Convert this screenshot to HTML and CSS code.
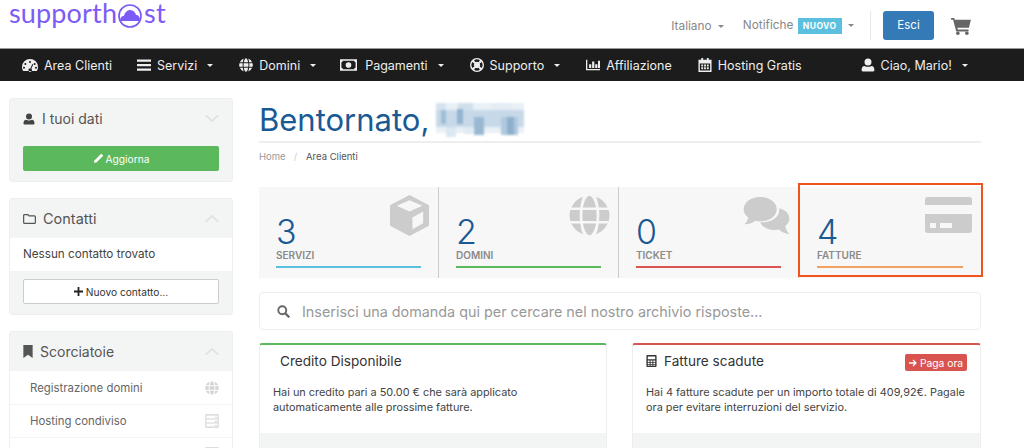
FILE: index.html
```html
<!DOCTYPE html>
<html lang="it">
<head>
<meta charset="utf-8">
<title>Area Clienti</title>
<link rel="stylesheet" href="styles.css">
</head>
<body>
<svg class="defs" width="0" height="0" aria-hidden="true">
  <symbol id="i-globe" viewBox="0 0 24 24"><path fill="currentColor" d="M8.200 7.300C8.900 3.300 10.500.4 12 .4s3.100 2.900 3.800 6.900ZM6.600 7.300H1.400A12 12 0 0 1 8.200 1C7.400 2.500 6.900 5 6.600 7.300ZM17.400 7.300h5.200A12 12 0 0 0 15.800 1c.8 1.500 1.300 4 1.600 6.300ZM.8 8.800h5.600c-.2 2.200-.2 4.200 0 6.400H.8a12 12 0 0 1 0-6.400ZM8 8.800h8c.2 2.200.2 4.200 0 6.400H8c-.2-2.200-.2-4.200 0-6.400ZM17.600 8.800h5.600a12 12 0 0 1 0 6.400h-5.600c.2-2.200.2-4.200 0-6.400ZM8.200 16.700h7.600c-.7 4-2.300 6.900-3.800 6.900s-3.100-2.900-3.800-6.900ZM1.400 16.700h5.200c.3 2.300.8 4.800 1.600 6.300a12 12 0 0 1-6.800-6.300ZM17.400 16.700h5.200a12 12 0 0 1-6.800 6.300c.8-1.500 1.300-4 1.600-6.300Z"/></symbol>
  <symbol id="i-user" viewBox="0 0 24 24"><path fill="currentColor" d="M12 1a6 6 0 1 1 0 12 6 6 0 0 1 0-12ZM3 23c-1 0-2-.8-2-2 0-4 1.500-7.500 5-7.500 1.500 1 3.500 1.700 6 1.700s4.500-.7 6-1.700c3.500 0 5 3.500 5 7.500 0 1.200-1 2-2 2Z"/></symbol>
  <symbol id="i-chev-down" viewBox="0 0 16 10"><path fill="none" stroke="currentColor" stroke-width="2" d="m1 1.500 7 6.500 7-6.500"/></symbol>
  <symbol id="i-chev-up" viewBox="0 0 16 10"><path fill="none" stroke="currentColor" stroke-width="2" d="m1 8.500 7-6.500 7 6.500"/></symbol>
  <symbol id="i-server" viewBox="0 0 16 16"><path fill="none" stroke="currentColor" stroke-width="1.200" d="M1 1h14v14H1zM1 5.700h14M1 10.300h14"/><path fill="currentColor" d="M11 8h3v1h-3zM11 12.500h3v1h-3zM11 3h3v1h-3z"/></symbol>
</svg>

<header class="topbar">
  <div class="logo">
    <span class="logo-text">supporth</span>
    <svg class="logo-mark" viewBox="0 0 24 24" aria-hidden="true"><circle cx="12" cy="12" r="11" fill="none" stroke="#7d5cf6" stroke-width="1.700"/><path fill="#7d5cf6" d="M2.300 17c-.4-2.600 1.200-5 3.700-5.200C6.800 8.500 9.200 6 12.200 6c3 0 5.200 2.200 5.800 5 2.700-.1 4.300 2.500 3.800 6Z"/></svg>
    <span class="logo-text">st</span>
  </div>
  <div class="top-right">
    <span class="top-link lang">Italiano <i class="caret"></i></span>
    <span class="top-link notif">Notifiche <b class="new">NUOVO</b> <i class="caret"></i></span>
    <span class="sep"></span>
    <span class="btn-esci">Esci</span>
    <svg class="cart" viewBox="0 0 22 20" aria-hidden="true"><path fill="#666" d="M0 1h3.500l.6 2H22l-2.200 9H7l.4 2h12v2H5.700L2.200 3H0Z"/><circle cx="7.500" cy="18" r="2" fill="#666"/><circle cx="17.500" cy="18" r="2" fill="#666"/></svg>
  </div>
</header>

<nav class="navbar">
  <a class="nav-item n-area"><svg class="ni" viewBox="0 0 24 20"><path fill="currentColor" fill-rule="evenodd" d="M12 1a12 12 0 0 0-12 12c0 2.500.7 4.500 2 6h20c1.300-1.500 2-3.500 2-6A12 12 0 0 0 12 1Zm0 3a1.500 1.500 0 1 1 0 3 1.500 1.500 0 0 1 0-3ZM5 7a1.500 1.500 0 1 1 0 3 1.500 1.500 0 0 1 0-3Zm14 0a1.500 1.500 0 1 1 0 3 1.500 1.500 0 0 1 0-3ZM3 12.500a1.500 1.500 0 1 1 0 3 1.500 1.500 0 0 1 0-3Zm18 0a1.500 1.500 0 1 1 0 3 1.500 1.500 0 0 1 0-3Zm-5.500-4 1.400.6-3 6.600a2.500 2.500 0 1 1-1.400-.6Z"/></svg>Area Clienti</a>
  <a class="nav-item n-serv"><svg class="ni" viewBox="0 0 14 14"><path fill="currentColor" d="M0 1.500h14v2.200H0zM0 6h14v2.200H0zM0 10.500h14v2.200H0z"/></svg>Servizi <i class="caret"></i></a>
  <a class="nav-item n-dom"><svg class="ni"><use href="#i-globe"/></svg>Domini <i class="caret"></i></a>
  <a class="nav-item n-pag"><svg class="ni wide" viewBox="0 0 18 12"><path fill="currentColor" fill-rule="evenodd" d="M0 0h18v12H0Zm3 1.500A1.500 1.500 0 0 1 1.500 3v6A1.500 1.500 0 0 1 3 10.500h12A1.500 1.500 0 0 1 16.500 9V3A1.500 1.500 0 0 1 15 1.500ZM9 3a3 3 0 1 1 0 6 3 3 0 0 1 0-6Z"/></svg>Pagamenti <i class="caret"></i></a>
  <a class="nav-item n-sup"><svg class="ni" viewBox="0 0 24 24"><path fill="currentColor" fill-rule="evenodd" d="M12 0a12 12 0 1 0 0 24 12 12 0 0 0 0-24Zm-5 3.800a9.500 9.500 0 0 1 10 0l-2.400 3.600a5 5 0 0 0-5.200 0ZM3.800 7l3.600 2.400a5 5 0 0 0 0 5.200L3.800 17a9.500 9.500 0 0 1 0-10Zm16.400 0a9.500 9.500 0 0 1 0 10l-3.600-2.400a5 5 0 0 0 0-5.200ZM7 20.200l2.400-3.600a5 5 0 0 0 5.200 0l2.400 3.600a9.500 9.500 0 0 1-10 0Z"/></svg>Supporto <i class="caret"></i></a>
  <a class="nav-item n-aff"><svg class="ni" viewBox="0 0 16 14"><path fill="currentColor" d="M0 1h1.500v10.500H16V13H0Zm3.500 5H6v4.500H3.500Zm3.500-3h2.500v7.500H7Zm3.500 3H13v4.500h-2.500ZM13.700 2H16v8.500h-2.300Z"/></svg>Affiliazione</a>
  <a class="nav-item n-host"><svg class="ni" viewBox="0 0 14 15"><path fill="currentColor" fill-rule="evenodd" d="M3 0h2v2h4V0h2v2h3v13H0V2h3Zm-1.500 6v7.500h11V6ZM3 7h2v2H3Zm3 0h2v2H6Zm3 0h2v2H9Zm-6 3h2v2H3Zm3 0h2v2H6Zm3 0h2v2H9Z"/></svg>Hosting Gratis</a>
  <a class="nav-item n-user"><svg class="ni"><use href="#i-user"/></svg>Ciao, Mario! <i class="caret"></i></a>
</nav>

<div class="page">
  <aside class="side">
    <section class="panel">
      <div class="panel-head"><svg class="ph-ic"><use href="#i-user"/></svg><span class="ph-t">I tuoi dati</span><svg class="chev"><use href="#i-chev-down"/></svg></div>
      <div class="panel-foot"><span class="btn green"><svg class="bic" viewBox="0 0 12 12"><path fill="#fff" d="M9 .8 11.200 3 4 10.200 1 11l.8-3Z"/></svg>Aggiorna</span></div>
    </section>
    <section class="panel">
      <div class="panel-head"><svg class="ph-ic folder" viewBox="0 0 14 12"><path fill="none" stroke="#555" stroke-width="1.300" d="M.7 2.200c0-.6.4-1 1-1h3.500l1.300 1.500h5.800c.6 0 1 .4 1 1v6c0 .6-.4 1-1 1h-10.600c-.6 0-1-.4-1-1Z"/></svg><span class="ph-t c-t">Contatti</span><svg class="chev"><use href="#i-chev-up"/></svg></div>
      <div class="panel-body">Nessun contatto trovato</div>
      <div class="panel-foot"><span class="btn white"><svg class="bic plus" viewBox="0 0 10 10"><path fill="#222" d="M4 0h2v4h4v2H6v4H4V6H0V4h4Z"/></svg>Nuovo contatto...</span></div>
    </section>
    <section class="panel">
      <div class="panel-head"><svg class="ph-ic book" viewBox="0 0 10 14"><path fill="#555" d="M0 0h10v14L5 10.500 0 14Z"/></svg><span class="ph-t s-t">Scorciatoie</span><svg class="chev"><use href="#i-chev-up"/></svg></div>
      <div class="row">Registrazione domini<svg class="row-ic"><use href="#i-globe"/></svg></div>
      <div class="row">Hosting condiviso<svg class="row-ic"><use href="#i-server"/></svg></div>
      <div class="row icon-only"><svg class="row-ic"><use href="#i-server"/></svg></div>
    </section>
  </aside>

  <main class="main">
    <div class="title-row">
      <h1>Bentornato,</h1>
      <svg class="pix" viewBox="0 0 92 40" aria-hidden="true">
        <g class="pix-g">
          <rect x="2" y="4" width="88" height="30" fill="#e9f0f6"/>
          <rect x="2" y="11" width="88" height="17" fill="#c7d9e9"/>
          <rect x="2" y="4" width="10" height="7" fill="#d5e3ee"/>
          <rect x="24" y="4" width="15" height="7" fill="#d0dfec"/>
          <rect x="58" y="4" width="20" height="7" fill="#e4edf4"/>
          <rect x="7" y="11" width="5" height="14" fill="#a0bdd6"/>
          <rect x="23" y="10" width="6" height="15" fill="#93b4d0"/>
          <rect x="40" y="18" width="10" height="18" fill="#9ab8d2"/>
          <rect x="67" y="18" width="17" height="18" fill="#b0c9de"/>
          <rect x="73" y="18" width="7" height="18" fill="#8fb0cc"/>
          <rect x="12" y="28" width="10" height="10" fill="#dbe7f1"/>
          <rect x="30" y="28" width="9" height="7" fill="#e1ebf3"/>
        </g>
      </svg>
    </div>
    <div class="crumbs"><span class="cr-home">Home</span><span class="cr-sep">/</span><span class="cr-cur">Area Clienti</span></div>

    <div class="stats">
      <div class="tile">
        <svg class="t-ic cube" viewBox="0 0 42 42"><path fill="#ccc" fill-rule="evenodd" d="M21 0 41 10.500v21L21 42 1 31.500v-21ZM21 5.500 8 11l13 6 13-6ZM24 23l11-6v12l-11 6Z"/></svg>
        <div class="num">3</div><div class="lbl">Servizi</div><div class="bar b-blue"></div>
      </div>
      <div class="tile">
        <svg class="t-ic gl"><use href="#i-globe"/></svg>
        <div class="num">2</div><div class="lbl">Domini</div><div class="bar b-green"></div>
      </div>
      <div class="tile">
        <svg class="t-ic chat" viewBox="0 0 47 38"><path fill="#ccc" d="M17 0c9.400 0 17 5.500 17 12.500S26.400 25 17 25c-1.700 0-3.400-.2-5-.6C9.500 26.500 6 28 1 28c2-2 3.500-4.500 3.700-7C1.800 18.800 0 15.800 0 12.500 0 5.500 7.600 0 17 0Z"/><path fill="#ccc" d="M36.500 11.500C42.500 13 47 17 47 22c0 3-1.600 5.700-4.200 7.700.2 2.500 2.200 6.300 4.200 8.300-4.500 0-8.500-2.500-11-4.500-1.400.3-2.500.5-4 .5-7 0-13-3-15-8 9 .5 21-4 19.500-14.500Z"/></svg>
        <div class="num">0</div><div class="lbl">Ticket</div><div class="bar b-red"></div>
      </div>
      <div class="tile last">
        <svg class="t-ic card" viewBox="0 0 47 36"><path fill="#ccc" fill-rule="evenodd" d="M3 0h41a3 3 0 0 1 3 3v5H0V3a3 3 0 0 1 3-3ZM0 17h47v16a3 3 0 0 1-3 3H3a3 3 0 0 1-3-3Zm5 9v5h6v-5Zm10 0v5h12v-5Z"/></svg>
        <div class="num">4</div><div class="lbl">Fatture</div><div class="bar b-orange"></div>
        <div class="highlight"></div>
      </div>
    </div>

    <div class="search">
      <svg class="s-ic" viewBox="0 0 14 14"><circle cx="5.700" cy="5.700" r="4.300" fill="none" stroke="#666" stroke-width="2"/><path stroke="#666" stroke-width="2.400" d="m9 9 4.300 4.300"/></svg>
      <span>Inserisci una domanda qui per cercare nel nostro archivio risposte...</span>
    </div>

    <div class="cards">
      <article class="box b-g">
        <div class="box-head"><span class="box-t indent">Credito Disponibile</span></div>
        <p class="box-text">Hai un credito pari a 50.00 € che sarà applicato automaticamente alle prossime fatture.</p>
        <div class="box-foot"></div>
      </article>
      <article class="box b-r">
        <div class="box-head"><svg class="calc" viewBox="0 0 11 13"><path fill="#333" fill-rule="evenodd" d="M1 0h9a1 1 0 0 1 1 1v11a1 1 0 0 1-1 1H1a1 1 0 0 1-1-1V1a1 1 0 0 1 1-1Zm.5 1.500v3h8v-3ZM1.500 6v1.500h2V6Zm3 0v1.500h2V6Zm3 0v1.500h2V6Zm-6 2.500V10h2V8.500Zm3 0V10h2V8.500Zm3 0V10h2V8.500Zm-6 2.500v.8h2V11Zm3 0v.8h2V11Zm3 0v.8h2V11Z"/></svg><span class="box-t">Fatture scadute</span><span class="pay"><svg class="pay-ic" viewBox="0 0 10 10"><path fill="none" stroke="#fff" stroke-width="1.600" d="M0 5h8.500M5 1.300 8.700 5 5 8.700"/></svg>Paga ora</span></div>
        <p class="box-text">Hai 4 fatture scadute per un importo totale di 409,92€. Pagale ora per evitare interruzioni del servizio.</p>
        <div class="box-foot"></div>
      </article>
    </div>
  </main>
</div>
</body>
</html>
```

FILE: styles.css
```css
* { box-sizing: border-box; }
html, body { margin: 0; height: 448px; overflow: hidden; }
body { font-family: Inter, "Liberation Sans", sans-serif; background: #fff; color: #333; }
.defs { position: absolute; }
svg { display: block; flex: none; }

.caret { display: inline-block; width: 0; height: 0; border-left: 3px solid transparent; border-right: 3px solid transparent; border-top: 3px solid currentColor; vertical-align: middle; margin-left: 3px; }

.topbar { height: 48px; display: flex; justify-content: space-between; align-items: flex-start; padding-left: 9px; }
.logo { display: flex; align-items: flex-start; color: #7d5cf6; height: 40px; }
.logo-text { font-family: Lato, sans-serif; font-size: 27px; line-height: 25px; letter-spacing: .15px; }
.logo-mark { width: 24px; height: 24px; margin: 4px 2px 0 1px; }
.top-right { display: flex; align-items: center; height: 51px; color: #888; font-size: 11.800px; }
.top-link { white-space: nowrap; }
.lang { margin-right: 19px; }
.new { display: inline-block; background: #5bc0de; color: #fff; font-size: 8.500px; font-weight: 700; letter-spacing: .5px; line-height: 16px; height: 16px; width: 44px; margin: 0 0 0 1px; vertical-align: middle; text-align: center; }
.sep { width: 1px; height: 29px; background: #e8e8e8; margin: 0 12px 0 16px; }
.btn-esci { width: 51px; height: 29px; background: #337ab7; border-radius: 3px; color: #fff; font-size: 11.500px; line-height: 29px; text-align: center; }
.cart { width: 20px; height: 18px; margin: 0 53px 0 17px; }

.navbar { height: 33px; background: #1c1c1c; border-top: 1px solid #999; display: flex; align-items: center; color: #eee; font-size: 12.500px; padding-left: 22px; }
.nav-item { display: flex; align-items: center; white-space: nowrap; }
.nav-item .caret { margin-left: 10px; }
.ni { width: 14px; height: 14px; margin-right: 6px; }
.ni.wide { width: 17px; height: 12px; margin-right: 8px; }
.n-area .ni { width: 16px; margin-right: 6px; }
.n-serv { margin-left: 25px; }
.n-dom { margin-left: 26px; }
.n-pag { margin-left: 24px; }
.n-sup { margin-left: 26px; }
.n-aff { margin-left: 26px; }
.n-host { margin-left: 26px; }
.n-user { margin-left: 59px; }

.page { display: flex; height: 367px; overflow: hidden; padding: 17px 0 0 9px; align-items: flex-start; }
.side { width: 224px; display: flex; flex-direction: column; gap: 16px; flex: none; }
.panel { background: #fff; border: 1px solid #eee; border-radius: 3px; overflow: hidden; }
.panel-head { height: 39px; background: #f3f4f4; display: flex; align-items: center; padding: 0 13px; color: #555; }
.ph-ic { width: 12px; height: 12px; color: #444; margin-right: 7px; }
.ph-ic.folder { width: 13px; margin-right: 7px; }
.ph-ic.book { width: 10px; height: 13px; margin-right: 7px; }
.ph-t { font-size: 14px; flex: 1; }
.c-t { font-size: 14.500px; }
.chev { width: 14px; height: 9px; color: #dfe2e2; }
.panel-foot { background: #f3f4f4; padding: 8px 13px 10px; }
.panel-body { height: 33px; font-size: 11.700px; line-height: 33px; padding-left: 13px; color: #444; }
.btn { height: 25px; display: flex; align-items: center; justify-content: center; font-size: 10.200px; border-radius: 2px; }
.btn.green { background: #5cb85c; color: #fff; }
.btn.white { background: #fff; border: 1px solid #ccc; color: #333; }
.bic { width: 11px; height: 11px; margin-right: 2px; }
.bic.plus { width: 9px; height: 9px; margin-right: 3px; }
.row { height: 33px; border-top: 1px solid #f3f3f3; display: flex; align-items: center; justify-content: space-between; padding: 0 13px 0 20px; font-size: 11.400px; color: #666; }
.panel-head + .row { border-top: 0; }
.icon-only { justify-content: flex-end; }
.row-ic { width: 14px; height: 14px; color: #d4d4d4; }

.main { width: 722px; margin-left: 26px; flex: none; }
.title-row { height: 45px; display: flex; align-items: flex-start; gap: 5px; border-bottom: 2px solid #eee; }
h1 { margin: 0; font-size: 31px; line-height: 43px; font-weight: 400; color: #1a5a94; }
.pix { width: 92px; height: 40px; margin-top: 1px; }
.pix-g { filter: blur(.8px); }
.crumbs { height: 44px; padding-top: 8px; font-size: 9.500px; line-height: 12px; display: flex; color: #999; }
.cr-sep { margin: 0 9px 0 8px; color: #ccc; }
.cr-cur { color: #555; }

.stats { display: flex; height: 91px; background: #f7f7f7; }
.tile { position: relative; flex: 0 0 180px; padding: 27px 0 0 17px; border-right: 1px solid #ccc; }
.tile.last { flex: 1; border-right: 0; padding-left: 18px; }
.num { font-size: 34px; line-height: 35px; color: #1a5a94; font-weight: 300; }
.lbl { font-size: 10px; line-height: 12px; font-weight: 600; text-transform: uppercase; color: #8a8a8a; }
.bar { height: 2px; width: 145px; margin-top: 5px; }
.last .bar { width: 146px; }
.b-blue { background: #5bc0de; }
.b-green { background: #5cb85c; }
.b-red { background: #d9534f; }
.b-orange { background: #f0a060; }
.t-ic { position: absolute; color: #ccc; }
.cube { width: 41px; height: 41px; top: 8px; right: 8px; }
.gl { width: 41px; height: 41px; top: 8px; right: 8px; }
.chat { width: 47px; height: 37px; top: 10px; right: 8px; }
.card { width: 47px; height: 36px; top: 10px; right: 9px; }
.highlight { position: absolute; left: -1px; top: -4px; right: -2px; bottom: 1px; border: 2px solid #f0541e; }

.search { height: 38px; margin-top: 14px; border: 1px solid #eee; border-radius: 4px; display: flex; align-items: center; padding-left: 17px; font-size: 14.370px; color: #999; }
.s-ic { width: 13px; height: 13px; margin-right: 12px; }

.cards { display: grid; grid-template-columns: 348px 349px; column-gap: 25px; margin-top: 13px; }
.box { border: 1px solid #eee; border-top-width: 2px; border-radius: 3px 3px 0 0; }
.b-g { border-top-color: #5cb85c; }
.b-r { border-top-color: #d9534f; }
.box-head { height: 32px; display: flex; align-items: center; padding: 0 13px; }
.box-t { font-size: 13.600px; color: #333; flex: 1; }
.box-t.indent { padding-left: 7px; }
.calc { width: 11px; height: 12px; margin-right: 7px; }
.pay { display: flex; align-items: center; height: 17px; width: 62px; margin-top: 3px; justify-content: center; background: #d9534f; color: #fff; font-size: 10.300px; border-radius: 2px; }
.pay-ic { width: 8px; height: 8px; margin-right: 3px; }
.box-text { margin: 0; height: 56px; padding: 8px 13px 0; font-size: 10.900px; line-height: 15px; color: #444; }
.box-foot { height: 40px; background: #f3f4f4; }
```
